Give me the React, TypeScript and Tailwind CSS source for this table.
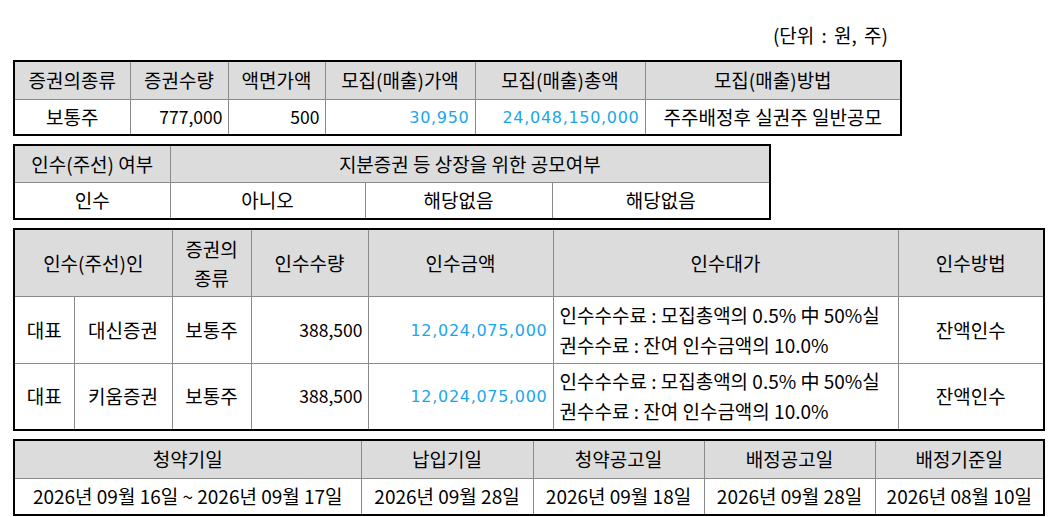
import React from 'react';

const FONT = { fontFamily: '"Noto Sans CJK KR", "Noto Sans", sans-serif' };

const th = 'border border-[#8a8a8a] bg-[#dcdcdc] font-normal text-center px-1';
const td = 'border border-[#8a8a8a] bg-white text-center px-1';
const num = 'border border-[#8a8a8a] bg-white text-right pr-[5px] pl-1 text-[17.5px]';
const blue = 'font-["DejaVu_Sans",sans-serif] text-[16px] tracking-[0.7px] text-[#1ba6ec]';

function Blue({ children }: { children: React.ReactNode }) {
  return <span className={blue}>{children}</span>;
}

const underwriters = [
  { name: '대신증권', qty: '388,500', amount: '12,024,075,000' },
  { name: '키움증권', qty: '388,500', amount: '12,024,075,000' },
];

export default function App() {
  return (
    <div className="min-h-[517px] bg-white pl-[13px] pt-[24px] text-[19px] leading-[22px] text-black" style={FONT}>
      <div className="w-[887px] pr-[12px] text-right [word-spacing:3px]">(단위 : 원, 주)</div>

      <table className="mt-[14px] w-[887px] table-fixed border-collapse border-2 border-black">
        <colgroup>
          <col className="w-[116px]" />
          <col className="w-[98px]" />
          <col className="w-[97px]" />
          <col className="w-[150px]" />
          <col className="w-[170px]" />
          <col className="w-[256px]" />
        </colgroup>
        <tbody>
          <tr className="h-[38px]">
            <th className={th}>증권의종류</th>
            <th className={th}>증권수량</th>
            <th className={th}>액면가액</th>
            <th className={th}>모집(매출)가액</th>
            <th className={th}>모집(매출)총액</th>
            <th className={th}>모집(매출)방법</th>
          </tr>
          <tr className="h-[36px]">
            <td className={td}>보통주</td>
            <td className={num}>777,000</td>
            <td className={num}>500</td>
            <td className={num}><Blue>30,950</Blue></td>
            <td className={num + ' pr-[3px]'}><Blue>24,048,150,000</Blue></td>
            <td className={td}>주주배정후 실권주 일반공모</td>
          </tr>
        </tbody>
      </table>

      <table className="mt-[8px] w-[756px] table-fixed border-collapse border-2 border-black">
        <colgroup>
          <col className="w-[156px]" />
          <col className="w-[195px]" />
          <col className="w-[187px]" />
          <col className="w-[218px]" />
        </colgroup>
        <tbody>
          <tr className="h-[37px]">
            <th className={th}>인수(주선) 여부</th>
            <th className={th} colSpan={3}>지분증권 등 상장을 위한 공모여부</th>
          </tr>
          <tr className="h-[37px]">
            <td className={td}>인수</td>
            <td className={td}>아니오</td>
            <td className={td}>해당없음</td>
            <td className={td}>해당없음</td>
          </tr>
        </tbody>
      </table>

      <table className="mt-[8px] w-[1030px] table-fixed border-collapse border-2 border-black">
        <colgroup>
          <col className="w-[60px]" />
          <col className="w-[98px]" />
          <col className="w-[79px]" />
          <col className="w-[117px]" />
          <col className="w-[185px]" />
          <col className="w-[345px]" />
          <col className="w-[146px]" />
        </colgroup>
        <tbody>
          <tr className="h-[67px]">
            <th className={th} colSpan={2}>인수(주선)인</th>
            <th className={th + ' leading-[29px]'}>증권의<br />종류</th>
            <th className={th}>인수수량</th>
            <th className={th}>인수금액</th>
            <th className={th}>인수대가</th>
            <th className={th}>인수방법</th>
          </tr>
          {underwriters.map((u) => (
            <tr key={u.name} className="h-[67px]">
              <td className={td}>대표</td>
              <td className={td}>{u.name}</td>
              <td className={td}>보통주</td>
              <td className={num}>{u.qty}</td>
              <td className={num + ' pr-[3px]'}><Blue>{u.amount}</Blue></td>
              <td className="border border-[#8a8a8a] bg-white pl-[6px] pr-1 text-left leading-[30px] whitespace-nowrap">
                인수수수료 : 모집총액의 0.5% 中 50%실<br />권수수료 : 잔여 인수금액의 10.0%
              </td>
              <td className={td}>잔액인수</td>
            </tr>
          ))}
        </tbody>
      </table>

      <table className="mt-[8px] w-[1030px] table-fixed border-collapse border-2 border-black">
        <colgroup>
          <col className="w-[347px]" />
          <col className="w-[172px]" />
          <col className="w-[171px]" />
          <col className="w-[171px]" />
          <col className="w-[169px]" />
        </colgroup>
        <tbody>
          <tr className="h-[38px]">
            <th className={th}>청약기일</th>
            <th className={th}>납입기일</th>
            <th className={th}>청약공고일</th>
            <th className={th}>배정공고일</th>
            <th className={th}>배정기준일</th>
          </tr>
          <tr className="h-[37px]">
            <td className={td}>2026년 09월 16일 ~ 2026년 09월 17일</td>
            <td className={td}>2026년 09월 28일</td>
            <td className={td}>2026년 09월 18일</td>
            <td className={td}>2026년 09월 28일</td>
            <td className={td}>2026년 08월 10일</td>
          </tr>
        </tbody>
      </table>
    </div>
  );
}
